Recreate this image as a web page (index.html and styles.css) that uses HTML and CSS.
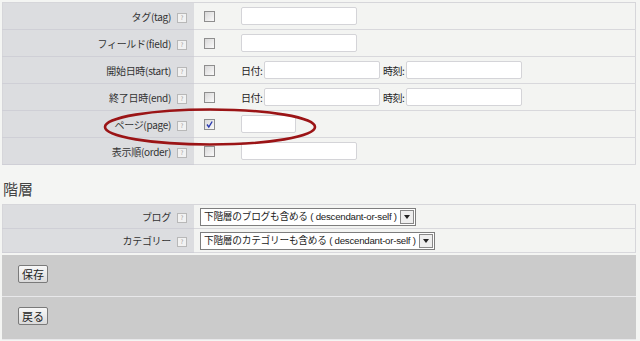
FILE: index.html
```html
<!DOCTYPE html>
<html lang="ja">
<head>
<meta charset="utf-8">
<title>設定</title>
<link rel="stylesheet" href="styles.css">
</head>
<body>
<div class="page">
    <table class="form">
        <tr>
            <th>タグ(tag)<span class="help">?</span></th>
            <td><span class="check"></span><input type="text" class="txt"></td>
        </tr>
        <tr>
            <th>フィールド(field)<span class="help">?</span></th>
            <td><span class="check"></span><input type="text" class="txt"></td>
        </tr>
        <tr>
            <th>開始日時(start)<span class="help">?</span></th>
            <td><span class="check"></span><span class="lbl">日付:</span><input type="text" class="txt"><span class="lbl">時刻:</span><input type="text" class="txt"></td>
        </tr>
        <tr>
            <th>終了日時(end)<span class="help">?</span></th>
            <td><span class="check"></span><span class="lbl">日付:</span><input type="text" class="txt"><span class="lbl">時刻:</span><input type="text" class="txt"></td>
        </tr>
        <tr>
            <th>ページ(page)<span class="help">?</span></th>
            <td><span class="check"><svg width="9" height="9" viewBox="0 0 9 9"><path d="M2 4.5 L3.8 7 L7.2 1.5" fill="none" stroke="#2a3ab0" stroke-width="1.4"/></svg></span><input type="text" class="txt short"></td>
        </tr>
        <tr>
            <th>表示順(order)<span class="help">?</span></th>
            <td><span class="check"></span><input type="text" class="txt"></td>
        </tr>
    </table>

    <h2>階層</h2>

    <table class="form sub">
        <tr>
            <th>ブログ<span class="help">?</span></th>
            <td><span class="sel">下階層のブログも含める ( descendant-or-self )<span class="arrow"></span></span></td>
        </tr>
        <tr>
            <th>カテゴリー<span class="help">?</span></th>
            <td><span class="sel">下階層のカテゴリーも含める ( descendant-or-self )<span class="arrow"></span></span></td>
        </tr>
    </table>

    <div class="actions"><button class="btn">保存</button></div>
    <div class="actions"><button class="btn">戻る</button></div>

    <svg class="mark" width="216" height="42" viewBox="0 0 216 42">
        <ellipse cx="108" cy="21" rx="105" ry="17.5" fill="none" stroke="#9b1416" stroke-width="2.6"/>
    </svg>
</div>
</body>
</html>
```

FILE: styles.css
```css
body {
    margin: 0;
    background-color: #f4f5f3;
    font-family: "Noto Sans CJK JP", "DejaVu Sans", sans-serif;
    font-size: 10px;
    color: #333;
}
.page {
    position: relative;
    width: 635px;
    padding: 2px 0 0 2px;
}
.form {
    width: 634px;
    border-collapse: collapse;
    border: 1px solid #d6d6da;
}
.form th {
    width: 184px;
    height: 26px;
    padding: 0 7px 0 0;
    background-color: #dcdde0;
    border-bottom: 1px solid #cfcfd6;
    font-weight: normal;
    text-align: right;
    white-space: nowrap;
    letter-spacing: -0.3px;
}
.form td {
    height: 26px;
    padding: 0 0 0 10px;
    background-color: #f3f4f2;
    border-bottom: 1px solid #d8d8dc;
}
.sub th, .sub td {
    height: 23px;
}
.sub td {
    padding-left: 6px;
}
.help {
    display: inline-block;
    width: 8px;
    height: 8px;
    margin-left: 6px;
    border: 1px solid #b8b8b8;
    background-color: #f2f2f2;
    color: #999;
    font-size: 6px;
    line-height: 8px;
    text-align: center;
    vertical-align: middle;
    letter-spacing: 0;
}
.check {
    display: inline-block;
    width: 9px;
    height: 9px;
    margin-right: 26px;
    border: 1px solid #8e8e8e;
    background: linear-gradient(135deg, #d8d8d8, #fafafa);
    line-height: 0;
    vertical-align: middle;
}
.txt {
    width: 114px;
    height: 16px;
    margin: 0;
    padding: 0;
    border: 1px solid #d4d4d8;
    border-radius: 2px;
    background-color: #fff;
    vertical-align: middle;
}
.short {
    width: 53px;
}
.lbl {
    display: inline-block;
    width: 23px;
    vertical-align: middle;
    font-size: 10px;
    letter-spacing: -0.5px;
    color: #222;
}
.lbl + .txt + .lbl {
    margin-left: 3px;
}
.sel {
    position: relative;
    display: inline-block;
    height: 16px;
    padding: 0 18px 0 3px;
    border: 1px solid #7d7d7d;
    background-color: #fff;
    color: #222;
    font-family: "Liberation Sans", "Noto Sans CJK JP", sans-serif;
    font-size: 9.7px;
    letter-spacing: -0.25px;
    line-height: 16px;
    vertical-align: middle;
}
.arrow {
    position: absolute;
    right: 1px;
    top: 1px;
    width: 12px;
    height: 12px;
    border: 1px solid #888;
    background-color: #eee;
}
.arrow::after {
    content: "";
    position: absolute;
    left: 3px;
    top: 4px;
    border-left: 3px solid transparent;
    border-right: 3px solid transparent;
    border-top: 4px solid #222;
}
h2 {
    margin: 13px 0 0 1px;
    height: 26px;
    font-size: 15px;
    font-weight: normal;
    color: #444;
}
.actions {
    width: 618px;
    height: 27px;
    margin-top: 2px;
    padding: 10px 0 4px 16px;
    background-color: #cbcbcb;
    border-bottom: 1px solid #e8e8ea;
}
.actions + .actions {
    margin-top: 0;
    height: 28px;
}
.btn {
    height: 18px;
    padding: 0 3px;
    border: 1px solid #7a7a7a;
    border-radius: 2px;
    background: linear-gradient(#f8f8f8, #dadada);
    font-family: "Noto Sans CJK JP", sans-serif;
    font-size: 11px;
    line-height: 14px;
    color: #222;
}
.mark {
    position: absolute;
    left: 102px;
    top: 106px;
}
```
